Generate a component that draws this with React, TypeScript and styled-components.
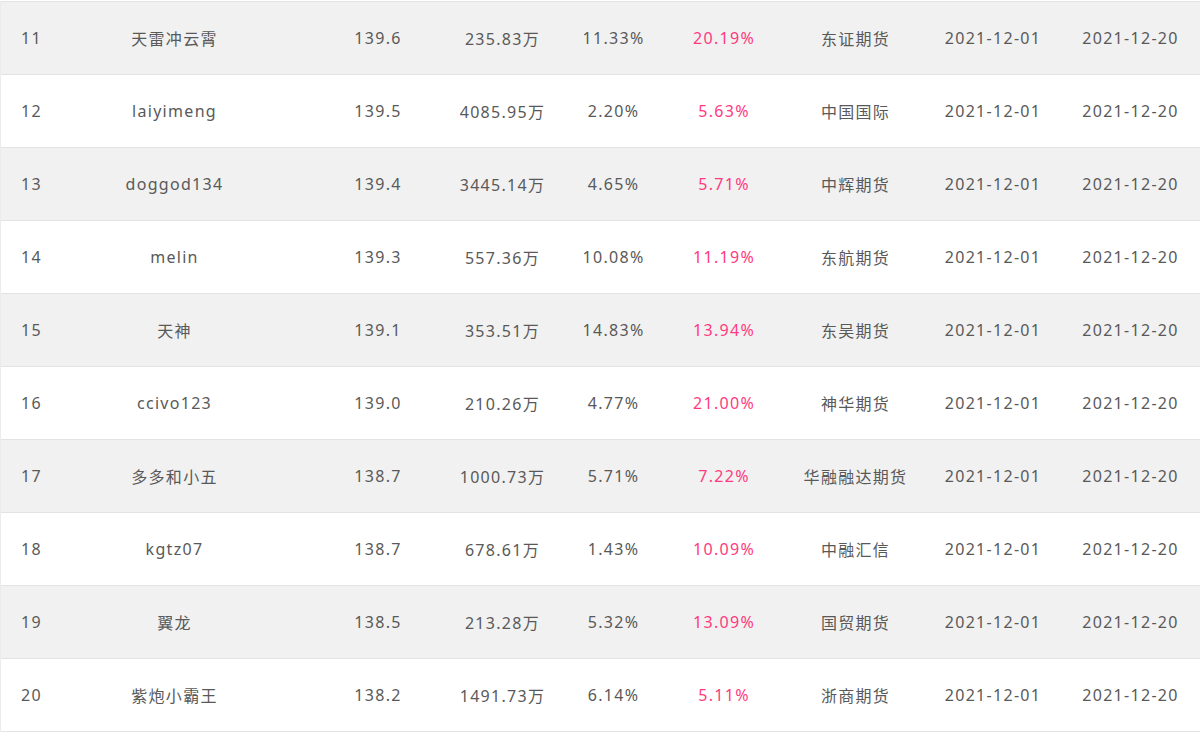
import styled, { createGlobalStyle } from "styled-components";

const GlobalStyle = createGlobalStyle`
  body {
    margin: 0;
    background: #ffffff;
    font-family: "Noto Sans", "Noto Sans CJK SC", sans-serif;
  }
`;

type Row = {
  rank: number;
  name: string;
  score: string;
  funds: string;
  drawdown: string;
  profit: string;
  broker: string;
  start: string;
  end: string;
};

const rows: Row[] = [
  { rank: 11, name: "天雷冲云霄", score: "139.6", funds: "235.83万", drawdown: "11.33%", profit: "20.19%", broker: "东证期货", start: "2021-12-01", end: "2021-12-20" },
  { rank: 12, name: "laiyimeng", score: "139.5", funds: "4085.95万", drawdown: "2.20%", profit: "5.63%", broker: "中国国际", start: "2021-12-01", end: "2021-12-20" },
  { rank: 13, name: "doggod134", score: "139.4", funds: "3445.14万", drawdown: "4.65%", profit: "5.71%", broker: "中辉期货", start: "2021-12-01", end: "2021-12-20" },
  { rank: 14, name: "melin", score: "139.3", funds: "557.36万", drawdown: "10.08%", profit: "11.19%", broker: "东航期货", start: "2021-12-01", end: "2021-12-20" },
  { rank: 15, name: "天神", score: "139.1", funds: "353.51万", drawdown: "14.83%", profit: "13.94%", broker: "东吴期货", start: "2021-12-01", end: "2021-12-20" },
  { rank: 16, name: "ccivo123", score: "139.0", funds: "210.26万", drawdown: "4.77%", profit: "21.00%", broker: "神华期货", start: "2021-12-01", end: "2021-12-20" },
  { rank: 17, name: "多多和小五", score: "138.7", funds: "1000.73万", drawdown: "5.71%", profit: "7.22%", broker: "华融融达期货", start: "2021-12-01", end: "2021-12-20" },
  { rank: 18, name: "kgtz07", score: "138.7", funds: "678.61万", drawdown: "1.43%", profit: "10.09%", broker: "中融汇信", start: "2021-12-01", end: "2021-12-20" },
  { rank: 19, name: "翼龙", score: "138.5", funds: "213.28万", drawdown: "5.32%", profit: "13.09%", broker: "国贸期货", start: "2021-12-01", end: "2021-12-20" },
  { rank: 20, name: "紫炮小霸王", score: "138.2", funds: "1491.73万", drawdown: "6.14%", profit: "5.11%", broker: "浙商期货", start: "2021-12-01", end: "2021-12-20" },
];

const Table = styled.div`
  margin-top: 1px;
  border-left: 1px solid #ececec;
`;

const TableRow = styled.div<{ $striped: boolean }>`
  display: grid;
  grid-template-columns: 61px 254px 124px 125px 97px 124px 139px 136px 139px;
  height: 72px;
  border-top: 1px solid #e3e3e3;
  background: ${(p) => (p.$striped ? "#f1f1f1" : "#ffffff")};

  &:last-child {
    border-bottom: 1px solid #e3e3e3;
  }
`;

const Cell = styled.div<{ $pink?: boolean; $shift?: number }>`
  display: flex;
  align-items: center;
  justify-content: center;
  padding-right: ${(p) => p.$shift ?? 0}px;
  white-space: nowrap;
  font-size: 16px;
  letter-spacing: 1.3px;
  color: ${(p) => (p.$pink ? "#ff3a80" : "#595959")};
`;

const App = () => {
  return (
    <>
      <GlobalStyle />
      <Table>
        {rows.map((r, i) => (
          <TableRow key={r.rank} $striped={i % 2 === 0}>
            <Cell>{r.rank}</Cell>
            <Cell $shift={29}>{r.name}</Cell>
            <Cell>{r.score}</Cell>
            <Cell>{r.funds}</Cell>
            <Cell>{r.drawdown}</Cell>
            <Cell $pink>{r.profit}</Cell>
            <Cell>{r.broker}</Cell>
            <Cell>{r.start}</Cell>
            <Cell>{r.end}</Cell>
          </TableRow>
        ))}
      </Table>
    </>
  );
};

export default App;
